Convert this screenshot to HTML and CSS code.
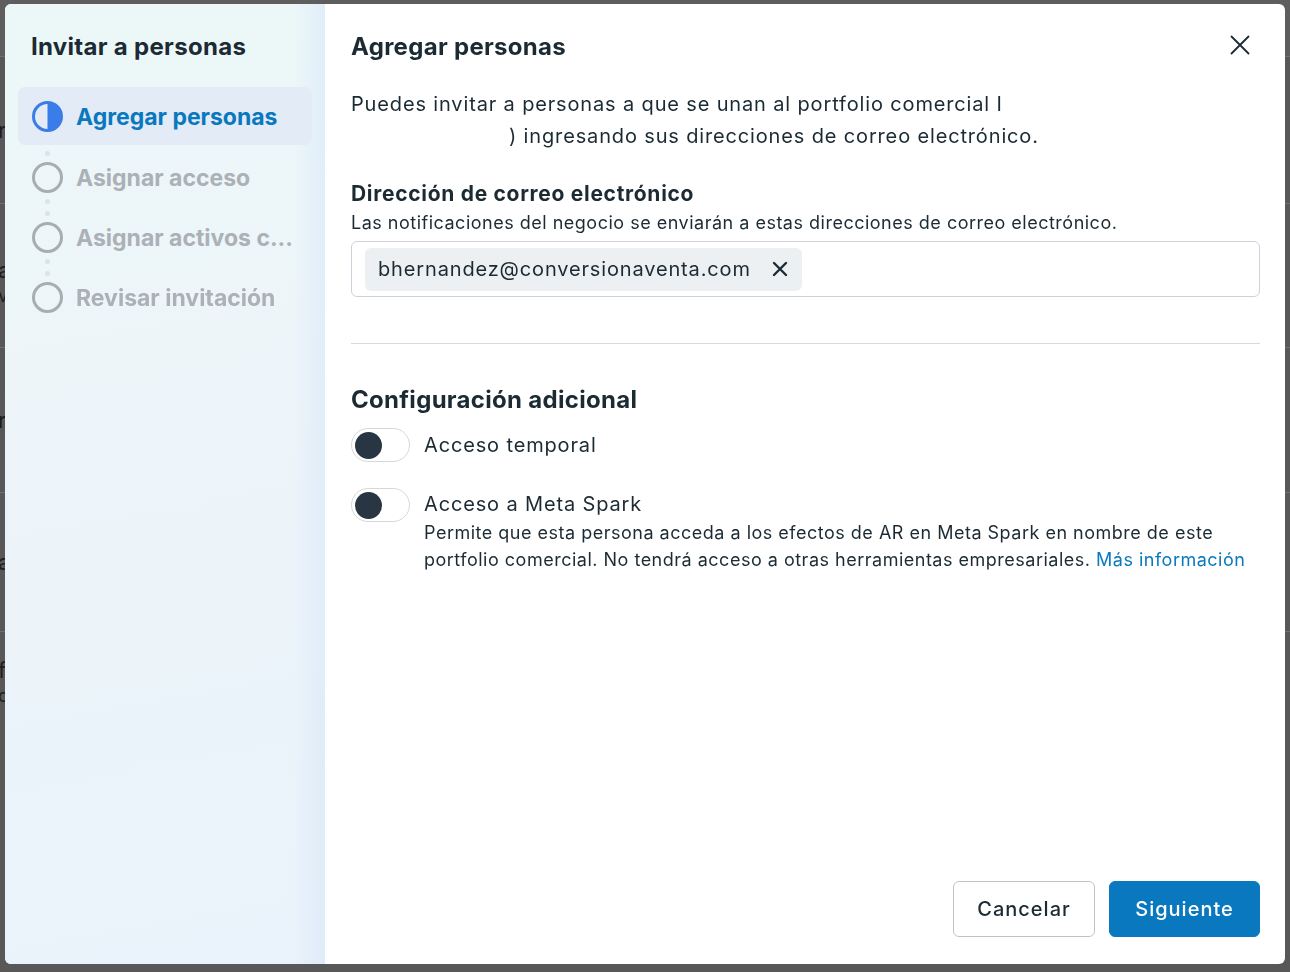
FILE: index.html
```html
<!DOCTYPE html>
<html lang="es">
<head>
<meta charset="utf-8">
<title>Invitar a personas</title>
<link rel="stylesheet" href="styles.css">
</head>
<body>
<div class="bg-page">
  <div class="bg-row bg-row-top"></div>
  <div class="bg-row bg-row-1"><span class="bg-text">rol</span></div>
  <div class="bg-row bg-row-2"><span class="bg-text">admin</span><span class="bg-text bg-small">ver</span></div>
  <div class="bg-row bg-row-3"><span class="bg-text">rol</span></div>
  <div class="bg-row bg-row-4"><span class="bg-text">admin</span></div>
  <div class="bg-row bg-row-5"><span class="bg-text">fin</span><span class="bg-text bg-small">ol</span></div>
</div>

<div class="overlay">
  <div class="modal" role="dialog" aria-label="Invitar a personas">
    <aside class="sidebar">
      <h2 class="side-title">Invitar a personas</h2>
      <div class="steps">
        <div class="step step-active">
          <svg class="step-icon" viewBox="0 0 31 31" width="31" height="31">
            <circle cx="15.5" cy="15.5" r="14" fill="none" stroke="#3a7de8" stroke-width="3"/>
            <path d="M15.5 1.5 A14 14 0 0 1 15.5 29.5 Z" fill="#3a7de8"/>
          </svg>
          <span class="step-label">Agregar personas</span>
        </div>
        <div class="connector one"><i></i></div>
        <div class="step">
          <svg class="step-icon" viewBox="0 0 31 31" width="31" height="31">
            <circle cx="15.5" cy="15.5" r="14" fill="none" stroke="#a8adb1" stroke-width="3"/>
          </svg>
          <span class="step-label">Asignar acceso</span>
        </div>
        <div class="connector"><i></i><i></i></div>
        <div class="step">
          <svg class="step-icon" viewBox="0 0 31 31" width="31" height="31">
            <circle cx="15.5" cy="15.5" r="14" fill="none" stroke="#a8adb1" stroke-width="3"/>
          </svg>
          <span class="step-label">Asignar activos c...</span>
        </div>
        <div class="connector"><i></i><i></i></div>
        <div class="step">
          <svg class="step-icon" viewBox="0 0 31 31" width="31" height="31">
            <circle cx="15.5" cy="15.5" r="14" fill="none" stroke="#a8adb1" stroke-width="3"/>
          </svg>
          <span class="step-label">Revisar invitación</span>
        </div>
      </div>
    </aside>

    <section class="main">
      <div class="header">
        <h1 class="main-title">Agregar personas</h1>
        <button class="close" aria-label="Cerrar">
          <svg viewBox="0 0 20 20" width="20" height="20">
            <path d="M1.5 1.5 L18.5 18.5 M18.5 1.5 L1.5 18.5" stroke="#1c2b33" stroke-width="1.8" stroke-linecap="round" fill="none"/>
          </svg>
        </button>
      </div>

      <p class="intro">Puedes invitar a personas a que se unan al portfolio comercial I<span class="redact r1"></span><br><span class="redact r2"></span>) ingresando sus direcciones de correo electrónico.</p>

      <h3 class="field-label">Dirección de correo electrónico</h3>
      <p class="field-help">Las notificaciones del negocio se enviarán a estas direcciones de correo electrónico.</p>
      <div class="email-input">
        <span class="chip">bhernandez@conversionaventa.com
          <svg class="chip-x" viewBox="0 0 16 16" width="16" height="16">
            <path d="M2 2 L14 14 M14 2 L2 14" stroke="#1c2b33" stroke-width="2.4" stroke-linecap="round" fill="none"/>
          </svg>
        </span>
      </div>

      <hr class="divider">

      <h2 class="section-title">Configuración adicional</h2>
      <div class="option">
        <span class="toggle"><span class="knob"></span></span>
        <div class="option-text">
          <div class="option-label">Acceso temporal</div>
        </div>
      </div>
      <div class="option option-2">
        <span class="toggle"><span class="knob"></span></span>
        <div class="option-text">
          <div class="option-label">Acceso a Meta Spark</div>
          <p class="option-desc">Permite que esta persona acceda a los efectos de AR en Meta Spark en nombre de este portfolio comercial. No tendrá acceso a otras herramientas empresariales. <a href="#" class="link">Más información</a></p>
        </div>
      </div>

      <div class="footer">
        <button class="btn btn-secondary">Cancelar</button>
        <button class="btn btn-primary">Siguiente</button>
      </div>
    </section>
  </div>
</div>
</body>
</html>
```

FILE: styles.css
```css
* { box-sizing: border-box; }

html, body {
  margin: 0;
  padding: 0;
  height: 100%;
}

body {
  background: #585858;
  font-family: Inter, "Noto Sans", "Liberation Sans", sans-serif;
  color: #1c2b33;
  overflow: hidden;
}

/* background page (dimmed) */
.bg-page {
  display: flex;
  flex-direction: column;
}
.bg-row {
  border-bottom: 1px solid #707070;
  display: flex;
  flex-direction: column;
  justify-content: center;
}
.bg-row-top { height: 57px; background: #5e5e5e; }
.bg-row-1 { height: 147px; }
.bg-row-2 { height: 144px; padding-top: 12px; }
.bg-row-3 { height: 145px; }
.bg-row-4 { height: 139px; }
.bg-row-5 { height: 200px; border-bottom: none; justify-content: flex-start; padding-top: 24px; }
.bg-text {
  font-size: 22px;
  line-height: 28px;
  color: #1e1e1e;
  margin-left: -2px;
}
.bg-small { font-size: 18px; line-height: 24px; }

/* overlay + modal */
.overlay {
  position: fixed;
  inset: 0;
  display: flex;
  justify-content: center;
  align-items: flex-start;
  padding-top: 4px;
}

.modal {
  width: 1280px;
  height: 960px;
  background: #ffffff;
  border-radius: 6px;
  overflow: hidden;
  display: flex;
}

/* sidebar */
.sidebar {
  width: 320px;
  flex: none;
  padding: 28px 13px 0 13px;
  background:
    linear-gradient(90deg, rgba(255,255,255,0) 90%, rgba(214,230,248,0.55) 100%),
    linear-gradient(170deg, #ecf8f8 0%, #edf5f9 35%, #eaf2fb 100%);
}

.side-title {
  margin: 0 0 0 13px;
  font-size: 24px;
  line-height: 30px;
  font-weight: 700;
  letter-spacing: 0.3px;
  color: #1c2b33;
}

.steps {
  margin-top: 25px;
  display: flex;
  flex-direction: column;
}

.step {
  display: flex;
  align-items: center;
  gap: 13px;
  padding-left: 14px;
  height: 31px;
}

.step-active {
  height: 58px;
  background: #e2ebf6;
  border-radius: 7px;
  padding-top: 1px;
}

.step-icon { flex: none; display: block; }

.step-label {
  font-size: 23px;
  font-weight: 700;
  letter-spacing: 0px;
  color: #abb1b6;
  white-space: nowrap;
}

.step-active .step-label { color: #0a78be; }

.connector {
  height: 29px;
  display: flex;
  flex-direction: column;
  justify-content: center;
  gap: 7px;
  padding-left: 27px;
}
.connector.one { height: 17px; }
.connector i {
  display: block;
  width: 5px;
  height: 5px;
  border-radius: 50%;
  background: #dde2e6;
}

/* main */
.main {
  flex: 1;
  display: flex;
  flex-direction: column;
  padding: 28px 25px 27px 26px;
}

.header {
  display: flex;
  justify-content: space-between;
  align-items: flex-start;
  height: 30px;
}

.main-title {
  margin: 0;
  font-size: 24px;
  line-height: 30px;
  font-weight: 700;
  letter-spacing: 0.3px;
}

.close {
  width: 30px;
  height: 30px;
  margin: -2px 5px 0 0;
  border: none;
  background: transparent;
  padding: 0;
  display: flex;
  align-items: center;
  justify-content: center;
  cursor: pointer;
}

.intro {
  margin: 26px 0 0;
  font-size: 20px;
  line-height: 32px;
  letter-spacing: 0.85px;
}

.redact { display: inline-block; height: 1px; }
.redact.r1 { width: 70px; }
.redact.r2 { width: 158px; }

.field-label {
  margin: 28px 0 0;
  font-size: 21px;
  line-height: 28px;
  font-weight: 700;
  letter-spacing: 0.7px;
}

.field-help {
  margin: 3px 0 0;
  font-size: 18px;
  line-height: 24px;
  letter-spacing: 0.5px;
}

.email-input {
  margin-top: 6px;
  height: 56px;
  border: 1px solid #cbd2d9;
  border-radius: 6px;
  padding: 6px 13px;
  display: flex;
  align-items: center;
}

.chip {
  height: 43px;
  display: inline-flex;
  align-items: center;
  gap: 21px;
  padding: 0 14px 0 13px;
  background: #edf0f2;
  border-radius: 6px;
  font-size: 20px;
  letter-spacing: 0.85px;
}

.chip-x { display: block; }

.divider {
  margin: 46px 0 0;
  border: none;
  border-top: 1px solid #d6dade;
}

.section-title {
  margin: 41px 0 0;
  font-size: 24px;
  line-height: 30px;
  font-weight: 700;
  letter-spacing: 0.3px;
}

.option {
  margin-top: 13px;
  display: flex;
  align-items: center;
  gap: 14px;
}

.option-2 {
  margin-top: 26px;
  align-items: flex-start;
}

.toggle {
  flex: none;
  width: 59px;
  height: 34px;
  border: 1px solid #d3d8dc;
  border-radius: 17px;
  background: #ffffff;
  display: flex;
  align-items: center;
  padding-left: 3px;
}

.knob {
  width: 27px;
  height: 27px;
  border-radius: 50%;
  background: #283643;
}

.option-label {
  font-size: 20px;
  line-height: 30px;
  letter-spacing: 0.85px;
}
.option-2 .option-label { margin-top: 1px; }

.option-desc {
  margin: 0;
  font-size: 18px;
  line-height: 27px;
  letter-spacing: 0.5px;
}

.link {
  color: #0a78be;
  text-decoration: none;
}

.footer {
  margin-top: auto;
  display: flex;
  justify-content: flex-end;
  gap: 14px;
}

.btn {
  height: 56px;
  border-radius: 6px;
  font-family: inherit;
  font-size: 20px;
  font-weight: 500;
  letter-spacing: 1px;
  padding: 0;
  cursor: pointer;
}

.btn-secondary {
  width: 142px;
  background: #ffffff;
  border: 1px solid #bcc3ca;
  color: #1c2b33;
}

.btn-primary {
  width: 151px;
  background: #0a78be;
  border: 1px solid #0a78be;
  color: #ffffff;
}
```
